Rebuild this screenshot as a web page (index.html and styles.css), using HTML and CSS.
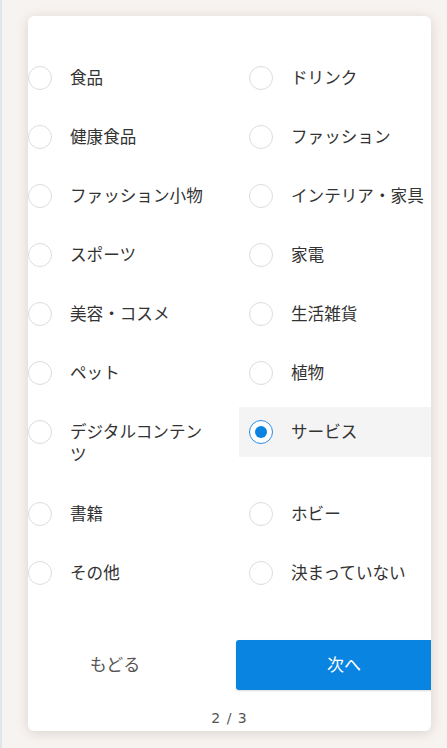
FILE: index.html
```html
<!DOCTYPE html>
<html lang="ja">
<head>
<meta charset="utf-8">
<title>カテゴリー選択</title>
<link rel="stylesheet" href="styles.css">
</head>
<body>
<div class="page">
  <div class="card">
    <div class="options">
      <label class="option"><span class="radio"></span><span class="label">食品</span></label>
      <label class="option"><span class="radio"></span><span class="label">ドリンク</span></label>
      <label class="option"><span class="radio"></span><span class="label">健康食品</span></label>
      <label class="option"><span class="radio"></span><span class="label">ファッション</span></label>
      <label class="option"><span class="radio"></span><span class="label">ファッション小物</span></label>
      <label class="option"><span class="radio"></span><span class="label">インテリア・家具</span></label>
      <label class="option"><span class="radio"></span><span class="label">スポーツ</span></label>
      <label class="option"><span class="radio"></span><span class="label">家電</span></label>
      <label class="option"><span class="radio"></span><span class="label">美容・コスメ</span></label>
      <label class="option"><span class="radio"></span><span class="label">生活雑貨</span></label>
      <label class="option"><span class="radio"></span><span class="label">ペット</span></label>
      <label class="option"><span class="radio"></span><span class="label">植物</span></label>
      <label class="option"><span class="radio"></span><span class="label">デジタルコンテンツ</span></label>
      <label class="option selected"><span class="radio"></span><span class="label">サービス</span></label>
      <label class="option"><span class="radio"></span><span class="label">書籍</span></label>
      <label class="option"><span class="radio"></span><span class="label">ホビー</span></label>
      <label class="option"><span class="radio"></span><span class="label">その他</span></label>
      <label class="option"><span class="radio"></span><span class="label">決まっていない</span></label>
    </div>
    <div class="actions">
      <button class="btn back" type="button">もどる</button>
      <button class="btn next" type="button">次へ</button>
    </div>
    <div class="pager">2 / 3</div>
  </div>
</div>
</body>
</html>
```

FILE: styles.css
```css
* { box-sizing: border-box; }

html, body {
  margin: 0;
  padding: 0;
  height: 100%;
}

body {
  background: #f7f3f0;
  font-family: "Noto Sans CJK JP", "Noto Sans", sans-serif;
  color: #333;
  border-left: 2px solid #dfe5ed;
}

.page {
  padding: 16px 16px 17px 26px;
  height: 100%;
}

.card {
  background: #fff;
  border-radius: 6px;
  box-shadow: 0 2px 12px rgba(120, 100, 90, 0.22);
  height: 715px;
  overflow: hidden;
  padding-top: 37px;
  display: flex;
  flex-direction: column;
}

.options {
  display: grid;
  grid-template-columns: 221px 221px;
  row-gap: 9px;
  align-items: start;
  margin-left: -10px;
}

.option {
  display: flex;
  align-items: flex-start;
  padding: 13px 10px;
  min-height: 50px;
  gap: 18px;
}

.option.selected {
  background: #f4f4f4;
}

.radio {
  flex: none;
  width: 24px;
  height: 24px;
  border-radius: 50%;
  border: 1px solid #dcdcdc;
  background: #fff;
  position: relative;
}

.selected .radio {
  border: 1.5px solid #2b8de2;
}

.selected .radio::after {
  content: "";
  position: absolute;
  left: 4.5px;
  top: 4.5px;
  width: 12px;
  height: 12px;
  border-radius: 50%;
  background: #0a84e0;
}

.label {
  font-size: 16.6px;
  line-height: 23px;
  padding-bottom: 1px;
  width: 140px;
  color: #333;
}

.actions {
  display: grid;
  grid-template-columns: 216px 216px;
  column-gap: 13px;
  margin-left: -21px;
  margin-top: 42px;
}

.btn {
  height: 50px;
  border: none;
  border-radius: 3px;
  font-family: inherit;
  font-size: 17px;
  padding: 0 0 4px;
  cursor: pointer;
}

.back {
  background: transparent;
  color: #555;
}

.next {
  background: #0984e0;
  color: #fff;
  box-shadow: 0 1px 2px rgba(0, 0, 0, 0.15);
}

.pager {
  text-align: center;
  font-size: 14px;
  color: #555;
  margin-top: 18px;
  line-height: 20px;
  font-family: "DejaVu Sans", sans-serif;
  letter-spacing: 1px;
}
```
